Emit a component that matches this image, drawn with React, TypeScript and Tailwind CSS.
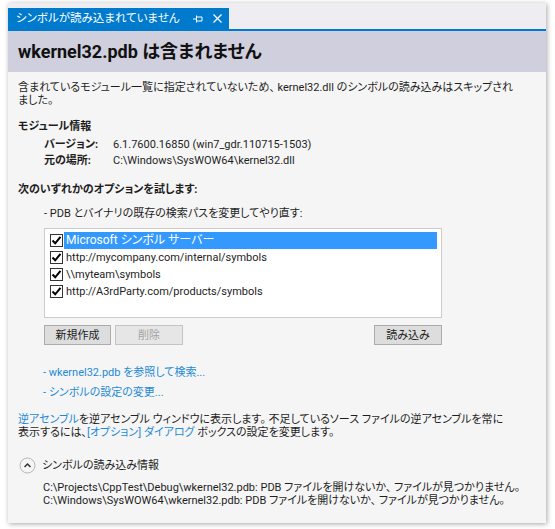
import React from "react";

const font = "font-['Roboto','Noto_Sans_CJK_JP',sans-serif] [font-feature-settings:'palt']";

const CheckBox = () => (
  <span className="w-[13px] h-[13px] border border-[#333333] bg-white flex items-center justify-center shrink-0">
    <svg width="11" height="11" viewBox="0 0 11 11">
      <path d="M1.5 5.5 L4.2 8.3 L9.5 1.8" fill="none" stroke="#000" strokeWidth="2" />
    </svg>
  </span>
);

const paths = [
  "Microsoft シンボル サーバー",
  "http://mycompany.com/internal/symbols",
  "\\\\myteam\\symbols",
  "http://A3rdParty.com/products/symbols",
];

const App = () => {
  return (
    <div className={`w-[555px] h-[529px] bg-white pt-[3px] pl-[8px] ${font} text-[11px] text-[#1e1e1e]`}>
      <div className="w-[538px] h-[520px] bg-[#f5f5f5] shadow-[1px_1px_5px_rgba(0,0,0,0.35)] flex flex-col">
        {/* tab strip */}
        <div className="h-[26px] bg-[#eeeef2] flex items-end">
          <div className="h-[21px] w-[221px] bg-[#007acc] text-white text-[11.5px] flex items-center pl-[8px] leading-none">
            <span className="w-[177px] whitespace-nowrap">シンボルが読み込まれていません</span>
            <svg width="10" height="10" viewBox="0 0 10 10">
              <path d="M0 5 H3.5 M3.5 1.5 V8.5 M3.5 3 H9 V7 H3.5" fill="none" stroke="#fff" strokeWidth="1" />
            </svg>
            <svg width="9" height="9" viewBox="0 0 9 9" className="ml-[10px]">
              <path d="M0.5 0.5 L8.5 8.5 M8.5 0.5 L0.5 8.5" fill="none" stroke="#fff" strokeWidth="1.3" />
            </svg>
          </div>
        </div>
        <div className="h-[2px] bg-[#007acc]" />
        {/* header */}
        <div className="h-[41px] bg-[#cfcfdd] flex items-center pl-[10px]">
          <h1 className="text-[18px] font-bold text-[#111] leading-none">wkernel32.pdb は含まれません</h1>
        </div>

        {/* body */}
        <div className="pl-[10px] pt-[9px] leading-[13px] text-[#1e1e1e]">
          <p className="whitespace-nowrap">
            含まれているモジュール一覧に指定されていないため、 kernel32.dll のシンボルの読み込みはスキップされ
            <br />
            ました。
          </p>

          <p className="font-bold mt-[13px]">モジュール情報</p>
          <div className="pl-[26px] mt-[5px] flex flex-col gap-[3px]">
            <div className="flex">
              <span className="w-[69px] font-bold">バージョン:</span>
              <span>6.1.7600.16850 (win7_gdr.110715-1503)</span>
            </div>
            <div className="flex">
              <span className="w-[69px] font-bold">元の場所:</span>
              <span>C:\Windows\SysWOW64\kernel32.dll</span>
            </div>
          </div>

          <p className="font-bold mt-[16px]">次のいずれかのオプションを試します:</p>
          <p className="pl-[26px] mt-[11px]">- PDB とバイナリの既存の検索パスを変更してやり直す:</p>

          <div className="ml-[26px] mt-[8px] w-[398px] h-[90px] border border-[#cccccc] bg-white pt-[3px] pl-[5px] pr-[4px]">
            {paths.map((p, i) => (
              <div key={p} className="h-[17px] flex items-center">
                <CheckBox />
                <span
                  className={
                    i === 0
                      ? "ml-[1px] flex-1 h-[17px] flex items-center pl-[2px] bg-[#3399ff] text-white text-[12px]"
                      : "ml-[1px] pl-[2px]"
                  }
                >
                  {p}
                </span>
              </div>
            ))}
          </div>

          <div className="ml-[26px] mt-[7px] w-[398px] flex h-[20px]">
            <button className="w-[67px] h-[20px] bg-[#dddddd] border border-[#acacac] text-[#1e1e1e] leading-none">
              新規作成
            </button>
            <button className="ml-[4px] w-[68px] h-[20px] bg-[#e6e6e6] border border-[#c4c4c4] text-[#a2a2a2] leading-none">
              削除
            </button>
            <button className="ml-auto w-[68px] h-[20px] bg-[#dddddd] border border-[#acacac] text-[#1e1e1e] leading-none">
              読み込み
            </button>
          </div>

          <div className="pl-[25px] mt-[21px] flex flex-col gap-[7px] text-[#1f8ad6]">
            <a>- wkernel32.pdb を参照して検索...</a>
            <a>- シンボルの設定の変更...</a>
          </div>

          <p className="mt-[14px] whitespace-nowrap">
            <a className="text-[#1f8ad6]">逆アセンブル</a>を逆アセンブル ウィンドウに表示します。 不足しているソース ファイルの逆アセンブルを常に
            <br />
            表示するには、<a className="text-[#1f8ad6]">[オプション] ダイアログ</a> ボックスの設定を変更します。
          </p>

          <div className="mt-[18px] flex items-center">
            <svg width="17" height="17" viewBox="0 0 17 17" className="ml-[1px]">
              <circle cx="8.5" cy="8.5" r="7.5" fill="#f5f5f5" stroke="#b4b4b4" strokeWidth="1" />
              <path d="M5.5 10 L8.5 7 L11.5 10" fill="none" stroke="#333" strokeWidth="1.5" />
            </svg>
            <span className="ml-[6px]">シンボルの読み込み情報</span>
          </div>

          <p className="pl-[25px] mt-[7px] whitespace-nowrap">
            C:\Projects\CppTest\Debug\wkernel32.pdb: PDB ファイルを開けないか、 ファイルが見つかりません。
            <br />
            C:\Windows\SysWOW64\wkernel32.pdb: PDB ファイルを開けないか、 ファイルが見つかりません。
          </p>
        </div>
      </div>
    </div>
  );
};

export default App;
